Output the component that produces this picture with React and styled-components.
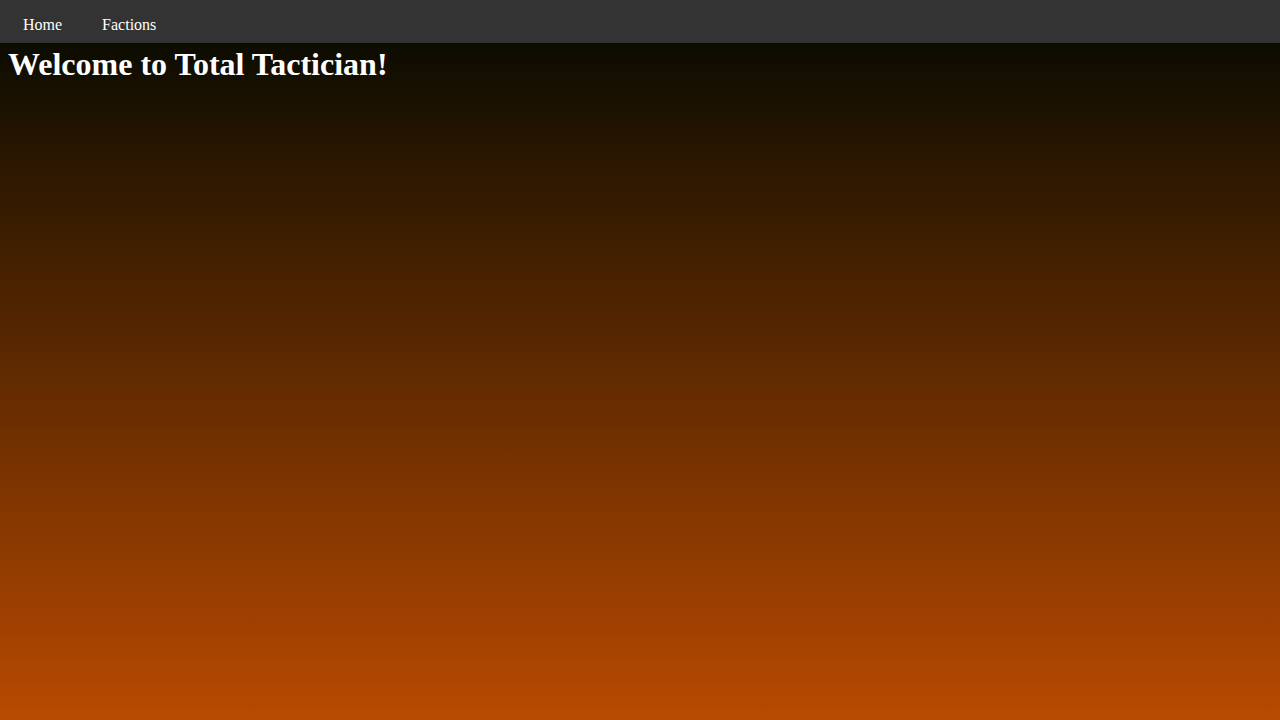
import React from 'react';
import styled, { createGlobalStyle } from 'styled-components';

const GlobalStyle = createGlobalStyle`
  html, body {
    margin: 0;
    padding: 0;
    height: 100%;
  }
  body {
    font-family: "Liberation Serif", "Times New Roman", serif;
    background: #0c0c00;
  }
`;

const Page = styled.div`
  display: flex;
  flex-direction: column;
  min-height: 100vh;
`;

const NavBar = styled.nav`
  display: flex;
  height: 43px;
  padding-left: 3px;
  background: #333333;
`;

const NavLink = styled.a`
  display: block;
  padding: 16px 20px 0;
  color: #ffffff;
  font-size: 16px;
  text-decoration: none;
  cursor: pointer;
`;

const Main = styled.main`
  flex: 1;
  padding: 0 8px;
  background: linear-gradient(to bottom, #0c0c00 0%, #b94a00 100%);
`;

const Title = styled.h1`
  margin: 3px 0 0;
  color: #ffffff;
  font-size: 32px;
  font-weight: bold;
`;

export default function App() {
  return (
    <Page>
      <GlobalStyle />
      <NavBar>
        <NavLink>Home</NavLink>
        <NavLink>Factions</NavLink>
      </NavBar>
      <Main>
        <Title>Welcome to Total Tactician!</Title>
      </Main>
    </Page>
  );
}
